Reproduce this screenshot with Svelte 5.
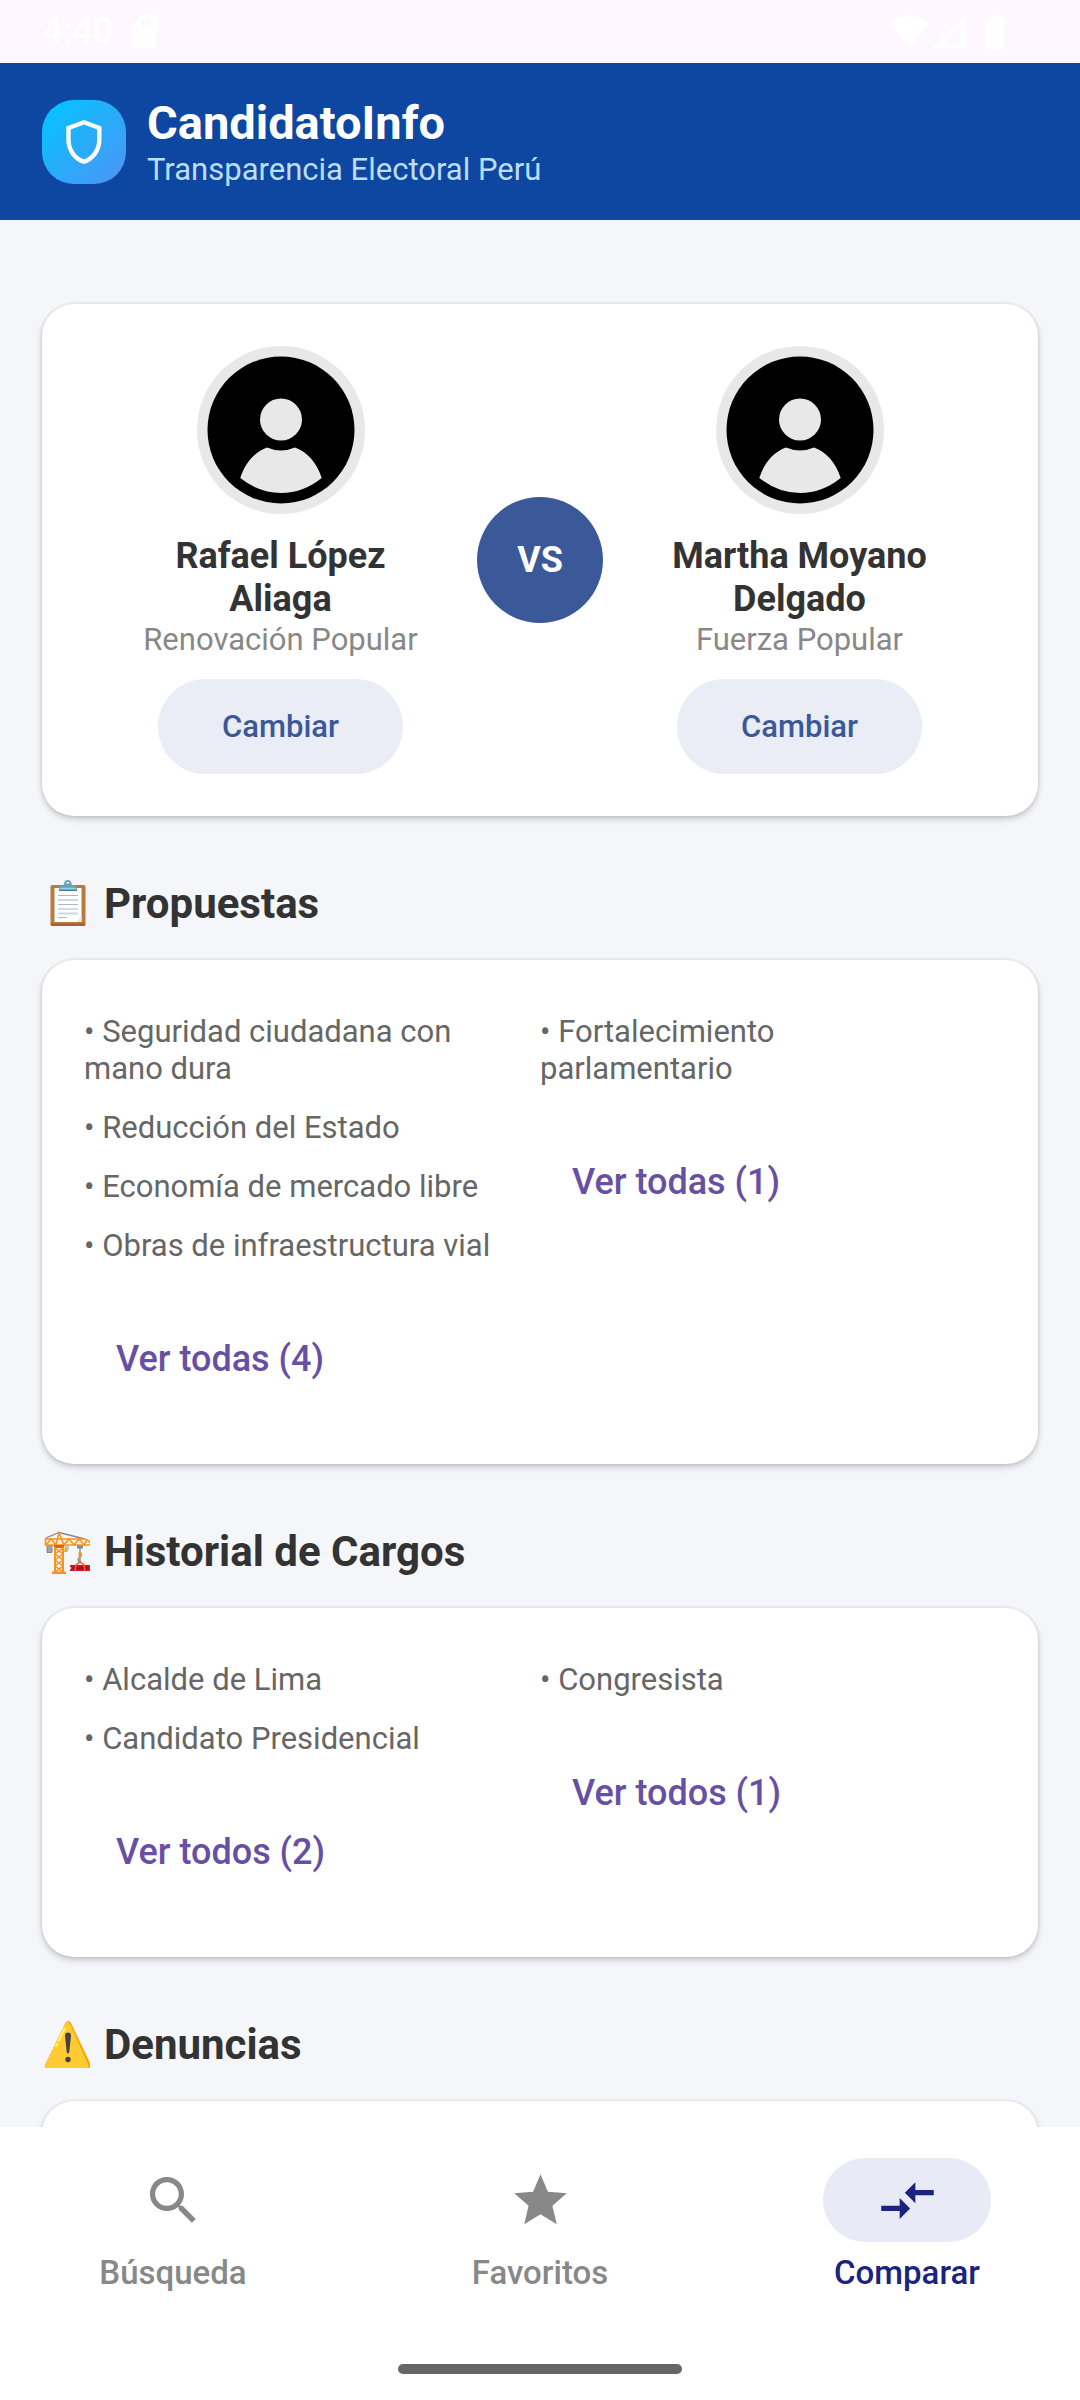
<script lang="ts">
  const candidates = [
    { name: 'Rafael López Aliaga', party: 'Renovación Popular' },
    { name: 'Martha Moyano Delgado', party: 'Fuerza Popular' },
  ];

  const sections = [
    {
      icon: 'clipboard',
      title: 'Propuestas',
      columns: [
        {
          items: [
            'Seguridad ciudadana con mano dura',
            'Reducción del Estado',
            'Economía de mercado libre',
            'Obras de infraestructura vial',
          ],
          more: 'Ver todas (4)',
        },
        { items: ['Fortalecimiento parlamentario'], more: 'Ver todas (1)' },
      ],
    },
    {
      icon: 'crane',
      title: 'Historial de Cargos',
      columns: [
        { items: ['Alcalde de Lima', 'Candidato Presidencial'], more: 'Ver todos (2)' },
        { items: ['Congresista'], more: 'Ver todos (1)' },
      ],
    },
    { icon: 'warning', title: 'Denuncias', columns: [] },
  ];

  const tabs = [
    {
      label: 'Búsqueda',
      path: 'M15.5 14h-.79l-.28-.27A6.471 6.471 0 0 0 16 9.5 6.5 6.5 0 1 0 9.5 16c1.61 0 3.09-.59 4.23-1.57l.27.28v.79l5 4.99L20.49 19l-4.99-5zm-6 0C7.01 14 5 11.99 5 9.5S7.01 5 9.5 5 14 7.01 14 9.5 11.99 14 9.5 14z',
    },
    {
      label: 'Favoritos',
      path: 'M12 17.27 18.18 21l-1.64-7.03L22 9.24l-7.19-.61L12 2 9.19 8.63 2 9.24l5.46 4.73L5.82 21z',
    },
    {
      label: 'Comparar',
      path: 'M9.01 14H2v2h7.01v3L13 15l-3.99-4v3zm5.98-1v-3H22V8h-7.01V5L11 9l3.99 4z',
    },
  ];

  let active = $state('Comparar');
</script>

{#snippet avatar()}
  <svg class="avatar" viewBox="0 0 168 168" aria-hidden="true">
    <circle cx="84" cy="84" r="84" fill="#e8e8e8" />
    <circle cx="84" cy="84" r="73.5" fill="#000" />
    <circle cx="84" cy="73.5" r="21" fill="#e8e8e8" />
    <path d="M43.3 132C48 117 57.500 106 70 101.500Q84 107.500 98 101.500C110.500 106 120 117 124.700 132Q106 147 84 147T43.300 132Z" fill="#e8e8e8" />
  </svg>
{/snippet}

{#snippet emoji(name: string)}
  <svg class="emoji" viewBox="0 0 48 49" aria-hidden="true">
    {#if name === 'clipboard'}
      <rect x="8.500" y="6" width="35" height="41" rx="2" fill="#ba793e" />
      <path d="M8.500 44.500h35v.5a2 2 0 0 1-2 2h-31a2 2 0 0 1-2-2z" fill="#a75f35" />
      <path d="M12.500 9h27v34h-27z" fill="#fff" />
      <path d="M34 43h5.500v-6z" fill="#e4eaee" />
      <path d="M16 16.500h20M16 25.500h20M16 30h20M16 38.500h9" stroke="#a9bac6" stroke-width="1.200" />
      <path d="M16 21h20M16 34.500h20" stroke="#ced8de" stroke-width="1.800" />
      <circle cx="25.800" cy="4.500" r="2.700" fill="none" stroke="#62a3b7" stroke-width="1.800" />
      <path d="M17 12V9q0-2 3-2.500c2-.5 2-2 4-2h3.500c2 0 2 1.500 4 2Q35 7 35 9v3z" fill="#62a3b7" />
      <path d="M18 9.500h16" stroke="#9bd0df" stroke-width="1.500" />
      <path d="M17 11.500h18" stroke="#437d91" />
    {:else if name === 'crane'}
      <path d="M4 11 17 5.500 43 12" fill="none" stroke="#82888c" stroke-width="1.300" />
      <path d="M5 18h5v7.500H5z" fill="#a5a5a5" stroke="#757575" stroke-width=".8" />
      <path d="M23 19h4v3l-2 3h-3z" fill="#f9a825" />
      <path d="M24 19h3v3l-2 1z" fill="#a4d4cc" />
      <path d="M3.500 12v6h46Q47 12 41 12z" fill="#fff0d9" stroke="#f7931e" stroke-width="1.700" />
      <path d="m4 18 5-6 5 6 3-12 5 12 5-6 5 6 5-6 5 6 3-5" fill="none" stroke="#f7931e" stroke-width="1.500" />
      <path d="M12 18h10v3H12z" fill="#df6316" />
      <path d="M13 20v25m8-25v25" stroke="#f7931e" stroke-width="2" />
      <path d="m13 21 8 6-8 6 8 6-8 6m8-24-8 6 8 6-8 6 8 6" fill="none" stroke="#f7931e" stroke-width="1.500" />
      <path d="M10 44.500h14V47H10z" fill="#f7931e" />
      <path d="M35 18.500h6v3h-6z" fill="#828b90" />
      <path d="M38 21v14m0-5q-4 3 0 5" fill="none" stroke="#8c9498" stroke-width="1.500" />
      <path d="M36.500 25.500h3.500v4.500h-3.500z" fill="#f7931e" />
      <path d="M28 38h21v1.500l-1.500 1.500 1.500 1.500V44H28v-1.500l1.500-1.500-1.500-1.500z" fill="#c9142c" />
      <path d="M30 41h17" stroke="#940e23" stroke-width="1.200" />
      <path d="m33 44 1-6 4-3 4 3 1 6" fill="none" stroke="#ff5a13" stroke-width="1.500" />
    {:else}
      <path d="M23.700 2.500q2.500-3 5 0L49 45q1 3-2 3H5q-3 0-2-3z" fill="#f2a600" />
      <path d="M23.200 3.500q2.300-3.500 4.600 0L46.500 45q1 3-1.500 3H5q-3 0-2-3z" fill="#ffca32" />
      <path d="m22.500 9-6 12M15 24l-1 2" stroke="#fff176" stroke-width="2.200" stroke-linecap="round" />
      <path d="M23 15.500q0-3 3-3t3 3l-1.700 16.500q-1.300 3-2.600 0z" fill="#424242" />
      <circle cx="26" cy="39.500" r="2.700" fill="#424242" />
    {/if}
  </svg>
{/snippet}

<div class="app">
  <div class="status">
    <span>4:40</span>
    <svg class="card-icon" viewBox="0 0 26 33" aria-hidden="true">
      <path fill-rule="evenodd" d="M10 0h13q3 0 3 3v27q0 3-3 3H3q-3 0-3-3V11zM10 5v6h3V5zm5 0v6h3V5zm5 0v6h3V5z" fill="#fff" />
    </svg>
    <svg class="signals" viewBox="0 0 115 34" aria-hidden="true">
      <path d="M0 9Q19.500-9 39 9L19.500 33z" fill="#fff" />
      <path fill-rule="evenodd" d="M75 1v32H42zM71.500 9 56.500 24v5.500h15z" fill="#fff" />
      <path d="M100 0h8v3h4q3 0 3 3v25q0 3-3 3H98q-3 0-3-3V6q0-3 3-3h2z" fill="#fff" />
    </svg>
  </div>

  <header>
    <svg class="logo" viewBox="0 0 84 84" aria-hidden="true">
      <defs>
        <linearGradient id="logo-fill" x1="0" y1="0" x2="1" y2="1">
          <stop offset="0" stop-color="#00c6ff" />
          <stop offset="1" stop-color="#4f93f5" />
        </linearGradient>
      </defs>
      <rect width="84" height="84" rx="32" fill="url(#logo-fill)" />
      <path transform="translate(15.500 15.500) scale(2.200)" d="M12 2 4 5v6.090c0 5.050 3.410 9.760 8 10.910 4.590-1.150 8-5.860 8-10.910V5l-8-3zm6 9.090c0 4-2.550 7.700-6 8.830-3.450-1.130-6-4.820-6-8.830v-4.700l6-2.250 6 2.250v4.700z" fill="#fff" />
    </svg>
    <div>
      <h1>CandidatoInfo</h1>
      <p>Transparencia Electoral Perú</p>
    </div>
  </header>

  <main>
    <section class="card versus">
      {#each candidates as person, i}
        {#if i === 1}<div class="vs">VS</div>{/if}
        <article>
          {@render avatar()}
          <h3>{person.name}</h3>
          <p>{person.party}</p>
          <button class="change">Cambiar</button>
        </article>
      {/each}
    </section>

    {#each sections as section}
      <h2>{@render emoji(section.icon)}{section.title}</h2>
      <section class="card facts">
        {#each section.columns as column}
          <div>
            <ul>
              {#each column.items as item}<li>• {item}</li>{/each}
            </ul>
            <button class="more">{column.more}</button>
          </div>
        {/each}
      </section>
    {/each}
  </main>

  <nav>
    {#each tabs as tab}
      <button class="tab" class:active={active === tab.label} onclick={() => (active = tab.label)}>
        <span class="pill">
          <svg viewBox="0 0 24 24" aria-hidden="true"><path d={tab.path} fill="currentColor" /></svg>
        </span>
        {tab.label}
      </button>
    {/each}
  </nav>
  <div class="gesture"><span></span></div>
</div>

<style>
  :global(body) {
    margin: 0;
  }
  .app {
    display: flex;
    flex-direction: column;
    height: 100vh;
    overflow: hidden;
    background: #f4f6fa;
    font-family: Roboto, 'Liberation Sans', sans-serif;
    font-size: 31px;
    line-height: 37px;
    color: #333;
  }
  h1,
  h2,
  h3,
  p,
  ul {
    margin: 0;
    padding: 0;
  }
  button {
    border: 0;
    background: none;
    font: inherit;
    cursor: pointer;
  }
  svg {
    display: block;
    flex: none;
  }

  .status {
    display: flex;
    flex: none;
    align-items: center;
    gap: 18px;
    height: 63px;
    padding: 0 75px 0 42px;
    box-sizing: border-box;
    background: #fef7ff;
    color: #fff;
    font-size: 36px;
    font-weight: 500;
  }
  .card-icon {
    width: 26px;
    height: 33px;
  }
  .signals {
    width: 115px;
    height: 34px;
    margin-left: auto;
  }

  header {
    display: flex;
    flex: none;
    align-items: center;
    gap: 21px;
    padding: 32px 42px;
    background: #0d47a1;
    color: #bbdefb;
  }
  .logo {
    width: 84px;
    height: 84px;
  }
  h1 {
    font-size: 47px;
    line-height: 56px;
    font-weight: 700;
    color: #fff;
  }

  main {
    flex: 1;
    min-height: 0;
    overflow: hidden;
    padding: 84px 42px 0;
  }
  .card {
    display: flex;
    padding: 42px;
    border-radius: 32px;
    background: #fff;
    box-shadow:
      0 3px 6px rgba(0, 0, 0, 0.2),
      0 0 3px rgba(0, 0, 0, 0.12);
  }
  .versus {
    align-items: center;
  }
  article {
    display: flex;
    flex: 1;
    flex-direction: column;
    align-items: center;
    padding: 0 42px;
    text-align: center;
  }
  .avatar {
    width: 168px;
    height: 168px;
    margin-bottom: 21px;
  }
  h3 {
    font-size: 36px;
    line-height: 43px;
    font-weight: 700;
  }
  article p {
    color: #888;
  }
  .change {
    margin-top: 21px;
    padding: 29px 64px;
    border-radius: 48px;
    background: #eaedf6;
    color: #3b5998;
    font-weight: 500;
  }
  .vs {
    display: grid;
    flex: none;
    place-items: center;
    width: 126px;
    height: 126px;
    border-radius: 50%;
    background: #3b5998;
    color: #fff;
    font-size: 36px;
    font-weight: 700;
  }

  h2 {
    display: flex;
    align-items: center;
    gap: 14px;
    margin: 63px 0 32px;
    font-size: 42px;
    line-height: 49px;
    font-weight: 700;
  }
  .emoji {
    width: 48px;
    height: 49px;
  }
  .facts {
    min-height: 84px;
  }
  .facts > div {
    flex: 1;
  }
  ul {
    list-style: none;
  }
  li {
    padding: 11px 42px 11px 0;
    color: #666;
  }
  .more {
    margin-top: 21px;
    padding: 0 32px;
    height: 126px;
    color: #6750a4;
    font-size: 36px;
    font-weight: 500;
  }

  nav {
    display: flex;
    flex: none;
    gap: 21px;
    padding: 31px 0;
    background: #fff;
  }
  .tab {
    display: flex;
    flex: 1;
    flex-direction: column;
    align-items: center;
    gap: 10px;
    padding: 0;
    color: #888;
    font-size: 33px;
    font-weight: 500;
    line-height: 42px;
  }
  .pill {
    display: grid;
    place-items: center;
    width: 168px;
    height: 84px;
    border-radius: 42px;
  }
  .pill svg {
    width: 63px;
    height: 63px;
  }
  .tab.active {
    color: #1a237e;
  }
  .active .pill {
    background: #e8eaf6;
  }
  .gesture {
    display: flex;
    flex: none;
    justify-content: center;
    padding: 39px 0 26px;
    background: #fff;
  }
  .gesture span {
    width: 284px;
    height: 10px;
    border-radius: 5px;
    background: #666;
  }
</style>
